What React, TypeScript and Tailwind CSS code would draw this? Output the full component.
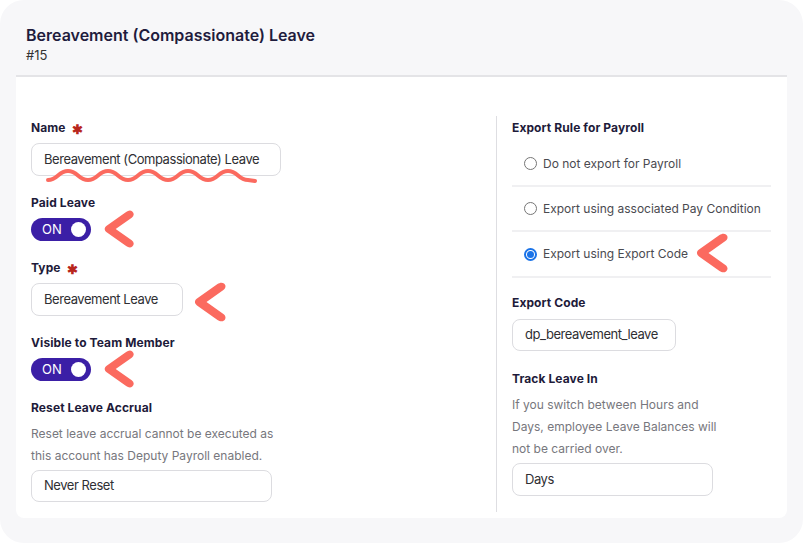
const font = "font-['Inter','Liberation_Sans',sans-serif]";

const Chevron = ({ className }: { className: string }) => (
  <svg viewBox="0 0 34 40" className={className}>
    <path
      d="M31 1.5C33.2 3.2 33 6.2 30.4 8.1L13.5 20L30.4 31.9C33 33.8 33.2 36.8 31 38.5C29 40 26.6 39.4 24.5 37.9L4 23.4C1.3 21.5 1.3 18.5 4 16.6L24.5 2.1C26.6 0.6 29 0 31 1.5Z"
      fill="#fb6a5f"
    />
  </svg>
);

const Label = ({ text, required, className = "" }: { text: string; required?: boolean; className?: string }) => (
  <div className={`h-[18px] leading-[18px] text-[12px] tracking-[0.1px] font-bold text-[#1e1b3a] flex items-center gap-[6px] ${className}`}>
    {text}
    {required && <span className="text-[#b8261c] text-[13px] leading-none mt-[3px]">✱</span>}
  </div>
);

const Field = ({ value, w, h = "h-[33px]" }: { value: string; w: string; h?: string }) => (
  <div className={`${w} ${h} rounded-[8px] border border-[#dcdce0] bg-white flex items-center px-[12px] text-[13px] tracking-[-0.45px] whitespace-nowrap text-[#2f2f33]`}>
    {value}
  </div>
);

const Toggle = ({ className = "" }: { className?: string }) => (
  <div className={`w-[60px] h-[23px] rounded-full bg-[#3b1fa6] flex items-center justify-between pl-[11px] pr-[5px] ${className}`}>
    <span className="text-white text-[13px] leading-none">ON</span>
    <span className="w-[15px] h-[15px] rounded-full bg-white" />
  </div>
);

const Radio = ({ text, checked, h = "h-[45px]" }: { text: string; checked?: boolean; h?: string }) => (
  <div className={`${h} border-b-2 border-[#f0f0f2] flex items-center pl-[12px] gap-[6px] text-[12px] text-[#4a4a50]`}>
    {checked ? (
      <span className="w-[13px] h-[13px] rounded-full border-2 border-[#1a73e8] flex items-center justify-center">
        <span className="w-[7px] h-[7px] rounded-full bg-[#1a73e8]" />
      </span>
    ) : (
      <span className="w-[13px] h-[13px] rounded-full border border-[#767676] bg-white" />
    )}
    {text}
  </div>
);

const App = () => {
  return (
    <div className={`w-[803px] h-[543px] bg-white relative ${font}`}>
      <div className="h-full rounded-[24px] bg-[#f7f7f9] px-4 pt-[25px] pb-[25px] flex flex-col">
        <div className="pl-[10px]">
          <h1 className="text-[16px] leading-5 font-semibold text-[#1f1c3d]">Bereavement (Compassionate) Leave</h1>
          <p className="text-[13px] leading-4 mt-[2px] text-[#333]">#15</p>
        </div>
        <div className="mt-[12px] flex-1 bg-white border-t-2 border-[#e4e4e7] rounded-b-lg flex pt-[39px] pb-[6px]">
          <div className="w-[480px] pl-[15px]">
            <Label text="Name" required className="mt-[3px]" />
            <div className="mt-[6px]">
              <Field value="Bereavement (Compassionate) Leave" w="w-[250px]" />
            </div>
            <Label text="Paid Leave" className="mt-[18px]" />
            <Toggle className="mt-[6px]" />
            <Label text="Type" required className="mt-[18px]" />
            <div className="mt-[6px]">
              <Field value="Bereavement Leave" w="w-[152px]" />
            </div>
            <Label text="Visible to Team Member" className="mt-[18px]" />
            <Toggle className="mt-[6px]" />
            <Label text="Reset Leave Accrual" className="mt-[18px]" />
            <p className="mt-[6px] text-[12px] leading-[22px] text-[#77777d] w-[250px]">
              Reset leave accrual cannot be executed as this account has Deputy Payroll enabled.
            </p>
            <div className="mt-[3px]">
              <Field value="Never Reset" w="w-[241px]" h="h-[32px]" />
            </div>
          </div>
          <div className="flex-1 border-l border-[#dedee2] pl-[15px]">
            <Label text="Export Rule for Payroll" className="mt-[3px]" />
            <div className="w-[259px] mt-[5px]">
              <Radio text="Do not export for Payroll" />
              <Radio text="Export using associated Pay Condition" />
              <Radio text="Export using Export Code" checked h="h-[46px]" />
            </div>
            <Label text="Export Code" className="mt-[16px]" />
            <div className="mt-[7px]">
              <Field value="dp_bereavement_leave" w="w-[164px]" h="h-[32px]" />
            </div>
            <Label text="Track Leave In" className="mt-[19px]" />
            <p className="mt-[6px] text-[12px] leading-[22px] text-[#77777d] w-[210px]">
              If you switch between Hours and Days, employee Leave Balances will not be carried over.
            </p>
            <div className="mt-[3px]">
              <Field value="Days" w="w-[201px]" />
            </div>
          </div>
        </div>
      </div>

      <svg className="absolute left-[40px] top-[160px] w-[225px] h-[30px]" viewBox="0 0 225 30">
        <path
          d="M8 20 C18 20 18 11 28 11 C38 11 38 20 48 20 C58 20 58 11 68 11 C78 11 78 20 88 20 C98 20 98 11 108 11 C118 11 118 20 128 20 C138 20 138 11 148 11 C158 11 158 20 168 20 C178 20 178 11 188 11 C198 11 198 20 208 20 L215 21"
          fill="none"
          stroke="#fb6a5f"
          strokeWidth="4"
          strokeLinecap="round"
        />
      </svg>
      <Chevron className="absolute left-[102px] top-[210px] w-[34px] h-[38px]" />
      <Chevron className="absolute left-[193px] top-[282px] w-[34px] h-[40px]" />
      <Chevron className="absolute left-[102px] top-[350px] w-[34px] h-[38px]" />
      <Chevron className="absolute left-[695px] top-[233px] w-[34px] h-[40px]" />
    </div>
  );
};

export default App;
